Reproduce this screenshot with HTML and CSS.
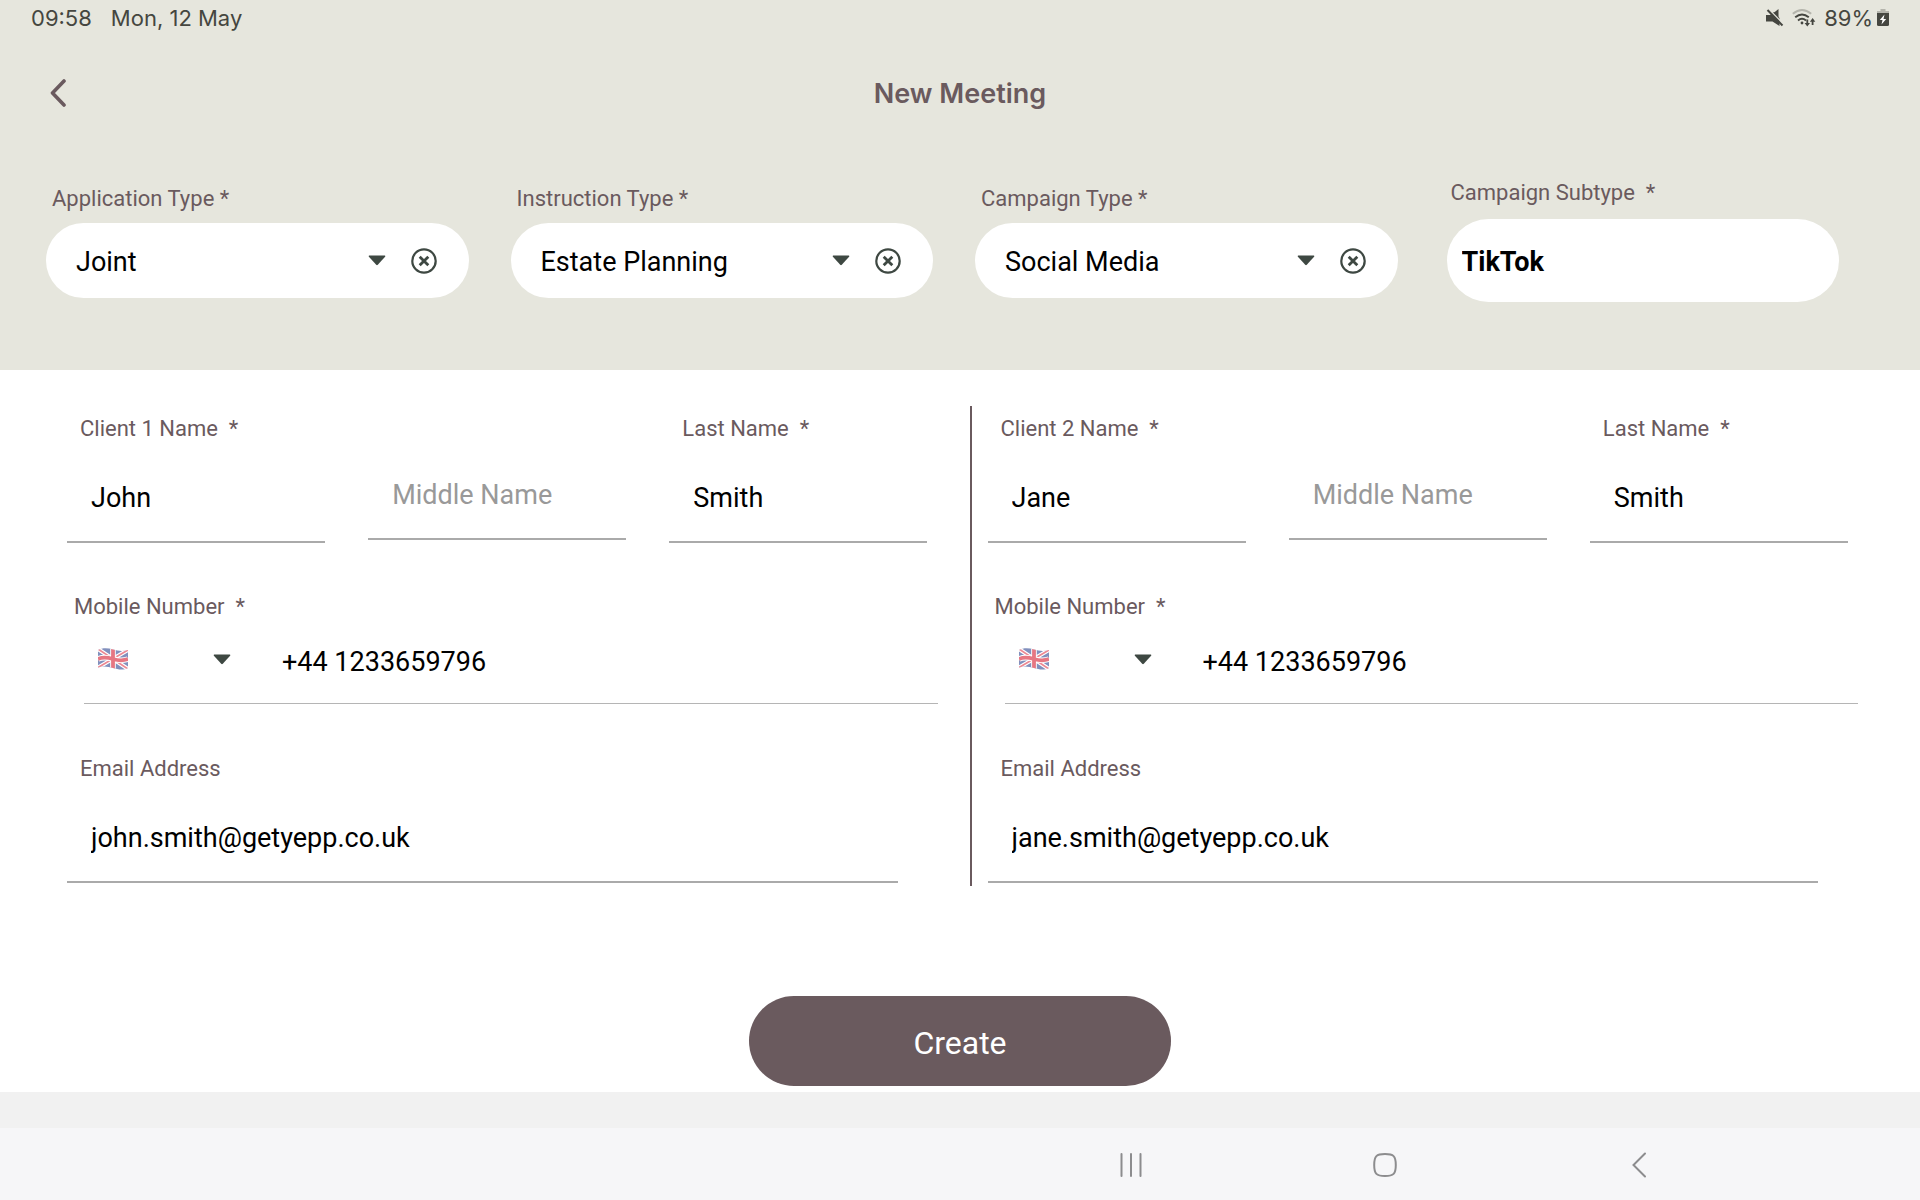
FILE: index.html
```html
<!DOCTYPE html>
<html lang="en">
<head>
    <meta charset="UTF-8">
    <meta name="viewport" content="width=device-width, initial-scale=1.0">
    <title>New Meeting</title>
    <link rel="stylesheet" href="styles.css">
</head>
<body>
    <!-- Shared icons -->
    <svg class="sprite" aria-hidden="true">
        <symbol id="arrow" viewBox="0 0 18 11">
            <path d="M1.2 0.5h15.6q1 .2.3 1.2l-7.3 8.1q-.8.8-1.6 0L.9 1.7Q.2.7 1.2.5z" fill="#3e4842"/>
        </symbol>
        <symbol id="clear" viewBox="0 0 28 28">
            <circle cx="14" cy="14" r="11.7" fill="none" stroke="#3e4842" stroke-width="2.2"/>
            <path d="M9.7 9.7l8.6 8.6M18.3 9.7l-8.6 8.6" stroke="#3e4842" stroke-width="2.8"/>
        </symbol>
        <symbol id="flag" viewBox="0 0 30 22">
            <clipPath id="flagShape">
                <path d="M0 2C5-.5 10 0 15 1.500S25 3.500 30 2V20C25 22.500 20 21.500 15 20S5 18 0 19.500z"/>
            </clipPath>
            <g clip-path="url(#flagShape)">
                <path d="M0 0h30v22H0z" fill="#8290bd"/>
                <path d="M0 1l30 20M30 2L0 19.500" stroke="#fff" stroke-width="4"/>
                <path d="M0 1l30 20M30 2L0 19.500" stroke="#ec8892" stroke-width="1.600"/>
                <path d="M15 0v22M0 11C5 8.500 10 9.500 15 11S25 13 30 11" stroke="#fff" stroke-width="5.600" fill="none"/>
                <path d="M15 0v22M0 11C5 8.500 10 9.500 15 11S25 13 30 11" stroke="#e67682" stroke-width="3.800" fill="none"/>
            </g>
        </symbol>
    </svg>

    <header class="header">
        <div class="status-bar">
            <div class="status-left">
                <span>09:58</span>
                <span>Mon, 12 May</span>
            </div>
            <div class="status-right">
                <svg class="icon-mute" width="18" height="18" viewBox="0 0 18 18">
                    <path d="M0 6h4l4-3 5.500 6V17L6.500 12.500H0z" fill="#454640"/>
                    <path d="M7.500 4L12.500 0v9z" fill="#454640"/>
                    <path d="M3 .5l15 15" stroke="#e6e6dd" stroke-width="1.500"/>
                    <path d="M1.500 1l15 15.500" stroke="#454640" stroke-width="2"/>
                </svg>
                <svg class="icon-wifi" width="24" height="18" viewBox="0 0 24 18" fill="none" stroke="#454640" stroke-width="1.900">
                    <path d="M.8 4.800q9.200-7.600 18.400 0" stroke="#b4b4ac"/>
                    <path d="M3.200 8.200q6.800-5.600 13.600 0"/>
                    <path d="M6 11.500q4-3.400 8 0"/>
                    <circle cx="10" cy="14" r="1.400" fill="#454640" stroke="none"/>
                    <path d="M15.300 10.500v5M20.600 16v-5" stroke-width="1.800"/>
                    <path d="M12.600 14h5.400l-2.700 3.500zM17.900 12.700h5.400L20.600 9z" fill="#454640" stroke="none"/>
                </svg>
                <span>89%</span>
                <svg width="12" height="18" viewBox="0 0 12 18">
                    <path d="M3.500 0h5v2H12v3H0V2h3.500z" fill="#b4b4ac"/>
                    <path d="M0 4h12v11.500q0 1.500-1.500 1.500h-9Q0 17 0 15.500z" fill="#454640"/>
                    <path d="M7.500 5.500L2.800 11h2.700l-1 4.500L9.200 10H6.500z" fill="#fff"/>
                </svg>
            </div>
        </div>

        <div class="title-bar">
            <button class="back-btn" type="button" aria-label="Back">
                <svg width="18" height="28" viewBox="0 0 18 28">
                    <path d="M15 2L3.500 14 15 26" fill="none" stroke="#6a5a5e" stroke-width="3.600" stroke-linecap="round" stroke-linejoin="round"/>
                </svg>
            </button>
            <h1>New Meeting</h1>
        </div>

        <div class="types">
            <div class="dropdown">
                <label for="applicationType">Application Type *</label>
                <div class="pill">
                    <select id="applicationType"><option>Joint</option></select>
                    <svg class="arrow"><use href="#arrow"/></svg>
                    <button type="button" aria-label="Clear application type"><svg><use href="#clear"/></svg></button>
                </div>
            </div>
            <div class="dropdown">
                <label for="instructionType">Instruction Type *</label>
                <div class="pill">
                    <select id="instructionType"><option>Estate Planning</option></select>
                    <svg class="arrow"><use href="#arrow"/></svg>
                    <button type="button" aria-label="Clear instruction type"><svg><use href="#clear"/></svg></button>
                </div>
            </div>
            <div class="dropdown">
                <label for="campaignType">Campaign Type *</label>
                <div class="pill">
                    <select id="campaignType"><option>Social Media</option></select>
                    <svg class="arrow"><use href="#arrow"/></svg>
                    <button type="button" aria-label="Clear campaign type"><svg><use href="#clear"/></svg></button>
                </div>
            </div>
            <div class="subtype">
                <label for="campaignSubtype">Campaign Subtype&nbsp; *</label>
                <input id="campaignSubtype" type="text" value="TikTok">
            </div>
        </div>
    </header>

    <main>
        <div class="clients">
            <!-- Client 1 -->
            <section class="client">
                <div class="names">
                    <div class="field">
                        <label for="firstName1">Client 1 Name&nbsp; *</label>
                        <input id="firstName1" type="text" value="John">
                    </div>
                    <div class="field middle">
                        <input type="text" placeholder="Middle Name" aria-label="Client 1 middle name">
                    </div>
                    <div class="field">
                        <label for="lastName1">Last Name&nbsp; *</label>
                        <input id="lastName1" type="text" value="Smith">
                    </div>
                </div>
                <div class="mobile">
                    <label for="mobile1">Mobile Number&nbsp; *</label>
                    <div class="phone">
                        <div class="country">
                            <svg class="flag"><use href="#flag"/></svg>
                            <select aria-label="Client 1 country code"><option value="GB" label=" "></option></select>
                            <svg class="arrow"><use href="#arrow"/></svg>
                        </div>
                        <input id="mobile1" type="tel" value="+44 1233659796">
                    </div>
                </div>
                <div class="field email">
                    <label for="email1">Email Address</label>
                    <input id="email1" type="email" value="john.smith@getyepp.co.uk">
                </div>
            </section>

            <div class="divider"></div>

            <!-- Client 2 -->
            <section class="client">
                <div class="names">
                    <div class="field">
                        <label for="firstName2">Client 2 Name&nbsp; *</label>
                        <input id="firstName2" type="text" value="Jane">
                    </div>
                    <div class="field middle">
                        <input type="text" placeholder="Middle Name" aria-label="Client 2 middle name">
                    </div>
                    <div class="field">
                        <label for="lastName2">Last Name&nbsp; *</label>
                        <input id="lastName2" type="text" value="Smith">
                    </div>
                </div>
                <div class="mobile">
                    <label for="mobile2">Mobile Number&nbsp; *</label>
                    <div class="phone">
                        <div class="country">
                            <svg class="flag"><use href="#flag"/></svg>
                            <select aria-label="Client 2 country code"><option value="GB" label=" "></option></select>
                            <svg class="arrow"><use href="#arrow"/></svg>
                        </div>
                        <input id="mobile2" type="tel" value="+44 1233659796">
                    </div>
                </div>
                <div class="field email">
                    <label for="email2">Email Address</label>
                    <input id="email2" type="email" value="jane.smith@getyepp.co.uk">
                </div>
            </section>
        </div>

        <button class="create-btn" type="button">Create</button>
    </main>

    <div class="strip"></div>

    <nav class="nav-bar">
        <button type="button" aria-label="Recent apps">
            <svg width="24" height="26" viewBox="0 0 24 26"><path d="M2.500 2v22M12 2v22M21.500 2v22"/></svg>
        </button>
        <button type="button" aria-label="Home">
            <svg width="26" height="26" viewBox="0 0 26 26"><path d="M13 2c8.500 0 10.800 2 10.800 11S21.500 24 13 24 2.200 22 2.200 13 4.500 2 13 2z"/></svg>
        </button>
        <button type="button" aria-label="Back">
            <svg width="16" height="26" viewBox="0 0 16 26"><path d="M14 1.500L2.500 13 14 24.500"/></svg>
        </button>
    </nav>
</body>
</html>
```

FILE: styles.css
```css
/* Global styling */
* {
    margin: 0;
    padding: 0;
    box-sizing: border-box;
}
body {
    min-height: 100vh;
    display: flex;
    flex-direction: column;
    font-family: Roboto, sans-serif;
    font-size: 27px;
    color: #000;
    background-color: #fff;
}
button, input, select {
    font: inherit;
    color: inherit;
    background: none;
    border: none;
    outline: none;
    appearance: none;
    min-width: 0;
}
button {
    cursor: pointer;
}
svg {
    display: block;
    flex-shrink: 0;
}
label {
    display: block;
    font-size: 22px;
    line-height: 26px;
    color: #6a5a5e;
}
.sprite {
    position: absolute;
    width: 0;
    height: 0;
}
.arrow {
    width: 18px;
    height: 11px;
}

/* Header */
.header {
    background-color: #e6e6dd;
}
.status-bar {
    height: 37px;
    padding: 0 31px 2px;
    display: flex;
    align-items: center;
    justify-content: space-between;
    font-family: Inter, sans-serif;
    font-size: 22px;
    color: #454640;
}
.status-left {
    display: flex;
    gap: 19px;
}
.status-right {
    display: flex;
    align-items: center;
    gap: 4px;
}
.icon-mute {
    margin-right: 4px;
}
.icon-wifi {
    margin-right: 4px;
}
.title-bar {
    height: 112px;
    padding: 0 49px;
    display: grid;
    grid-template-columns: 1fr auto 1fr;
    align-items: center;
}
.back-btn {
    justify-self: start;
}
h1 {
    font-family: Inter, sans-serif;
    font-size: 27px;
    font-weight: 600;
    color: #6a5a5e;
}

/* Meeting type fields */
.types {
    padding: 31px 58px 68px 46px;
    display: grid;
    grid-template-columns: repeat(4, 1fr);
    gap: 42px;
    align-items: start;
}
.dropdown {
    margin-top: 6px;
}
.dropdown label {
    padding-left: 6px;
    margin-bottom: 11px;
}
.pill {
    height: 75px;
    padding: 0 31px 0 30px;
    border-radius: 38px;
    background-color: #fff;
    display: flex;
    align-items: center;
    gap: 24px;
}
.pill select {
    flex: 1;
    height: 75px;
    padding-top: 2px;
}
.pill button svg {
    width: 28px;
    height: 28px;
}
.subtype {
    padding: 0 23px 0 7px;
}
.subtype label {
    padding-left: 4px;
    margin-bottom: 13px;
}
.subtype input {
    width: 100%;
    height: 83px;
    padding: 2px 15px 0;
    border-radius: 42px;
    background-color: #fff;
    font-weight: 700;
}

/* Clients */
main {
    flex: 1;
    padding-top: 36px;
    display: flex;
    flex-direction: column;
}
.clients {
    padding: 0 30px 0 67px;
    display: grid;
    grid-template-columns: 1fr 18px 1fr;
}
.divider {
    width: 2px;
    background-color: #6a5a5e;
}
.client {
    padding: 10px 0 3px;
}
.names {
    padding-right: 42px;
    display: grid;
    grid-template-columns: repeat(3, 1fr);
    gap: 43px;
    align-items: end;
}
.field label {
    padding-left: 13px;
    margin-bottom: 13px;
}
.field input {
    width: 100%;
    height: 88px;
    padding: 0 24px;
    border-bottom: 2px solid #aaa;
}
.field input::placeholder {
    color: #999;
}
.middle {
    margin-bottom: 3px;
}
.mobile {
    margin-top: 51px;
}
.mobile label {
    padding-left: 7px;
}
.phone {
    height: 84px;
    margin: 0 32px 0 17px;
    border-bottom: 1px solid #b5b5b5;
    display: flex;
    align-items: center;
    gap: 51px;
}
.country {
    width: 147px;
    padding-left: 14px;
    padding-bottom: 5px;
    display: flex;
    align-items: center;
}
.country select {
    flex: 1;
}
.flag {
    width: 30px;
    height: 22px;
}
.phone input {
    flex: 1;
    height: 83px;
}
.email {
    margin-top: 52px;
    padding-right: 72px;
}
.create-btn {
    width: 22%;
    height: 90px;
    margin: 110px auto 6px;
    padding-top: 4px;
    border-radius: 45px;
    background-color: #6a5a5e;
    color: #fff;
    font-size: 32px;
}

/* Bottom bars */
.strip {
    height: 36px;
    background-color: #f1f1f1;
}
.nav-bar {
    height: 72px;
    padding: 2px 154px 0 0;
    background-color: #f6f6f8;
    display: flex;
    justify-content: flex-end;
}
.nav-bar button {
    width: 254px;
    display: flex;
    align-items: center;
    justify-content: center;
}
.nav-bar path {
    fill: none;
    stroke: #8c8c8e;
    stroke-width: 2;
    stroke-linecap: round;
}
```
